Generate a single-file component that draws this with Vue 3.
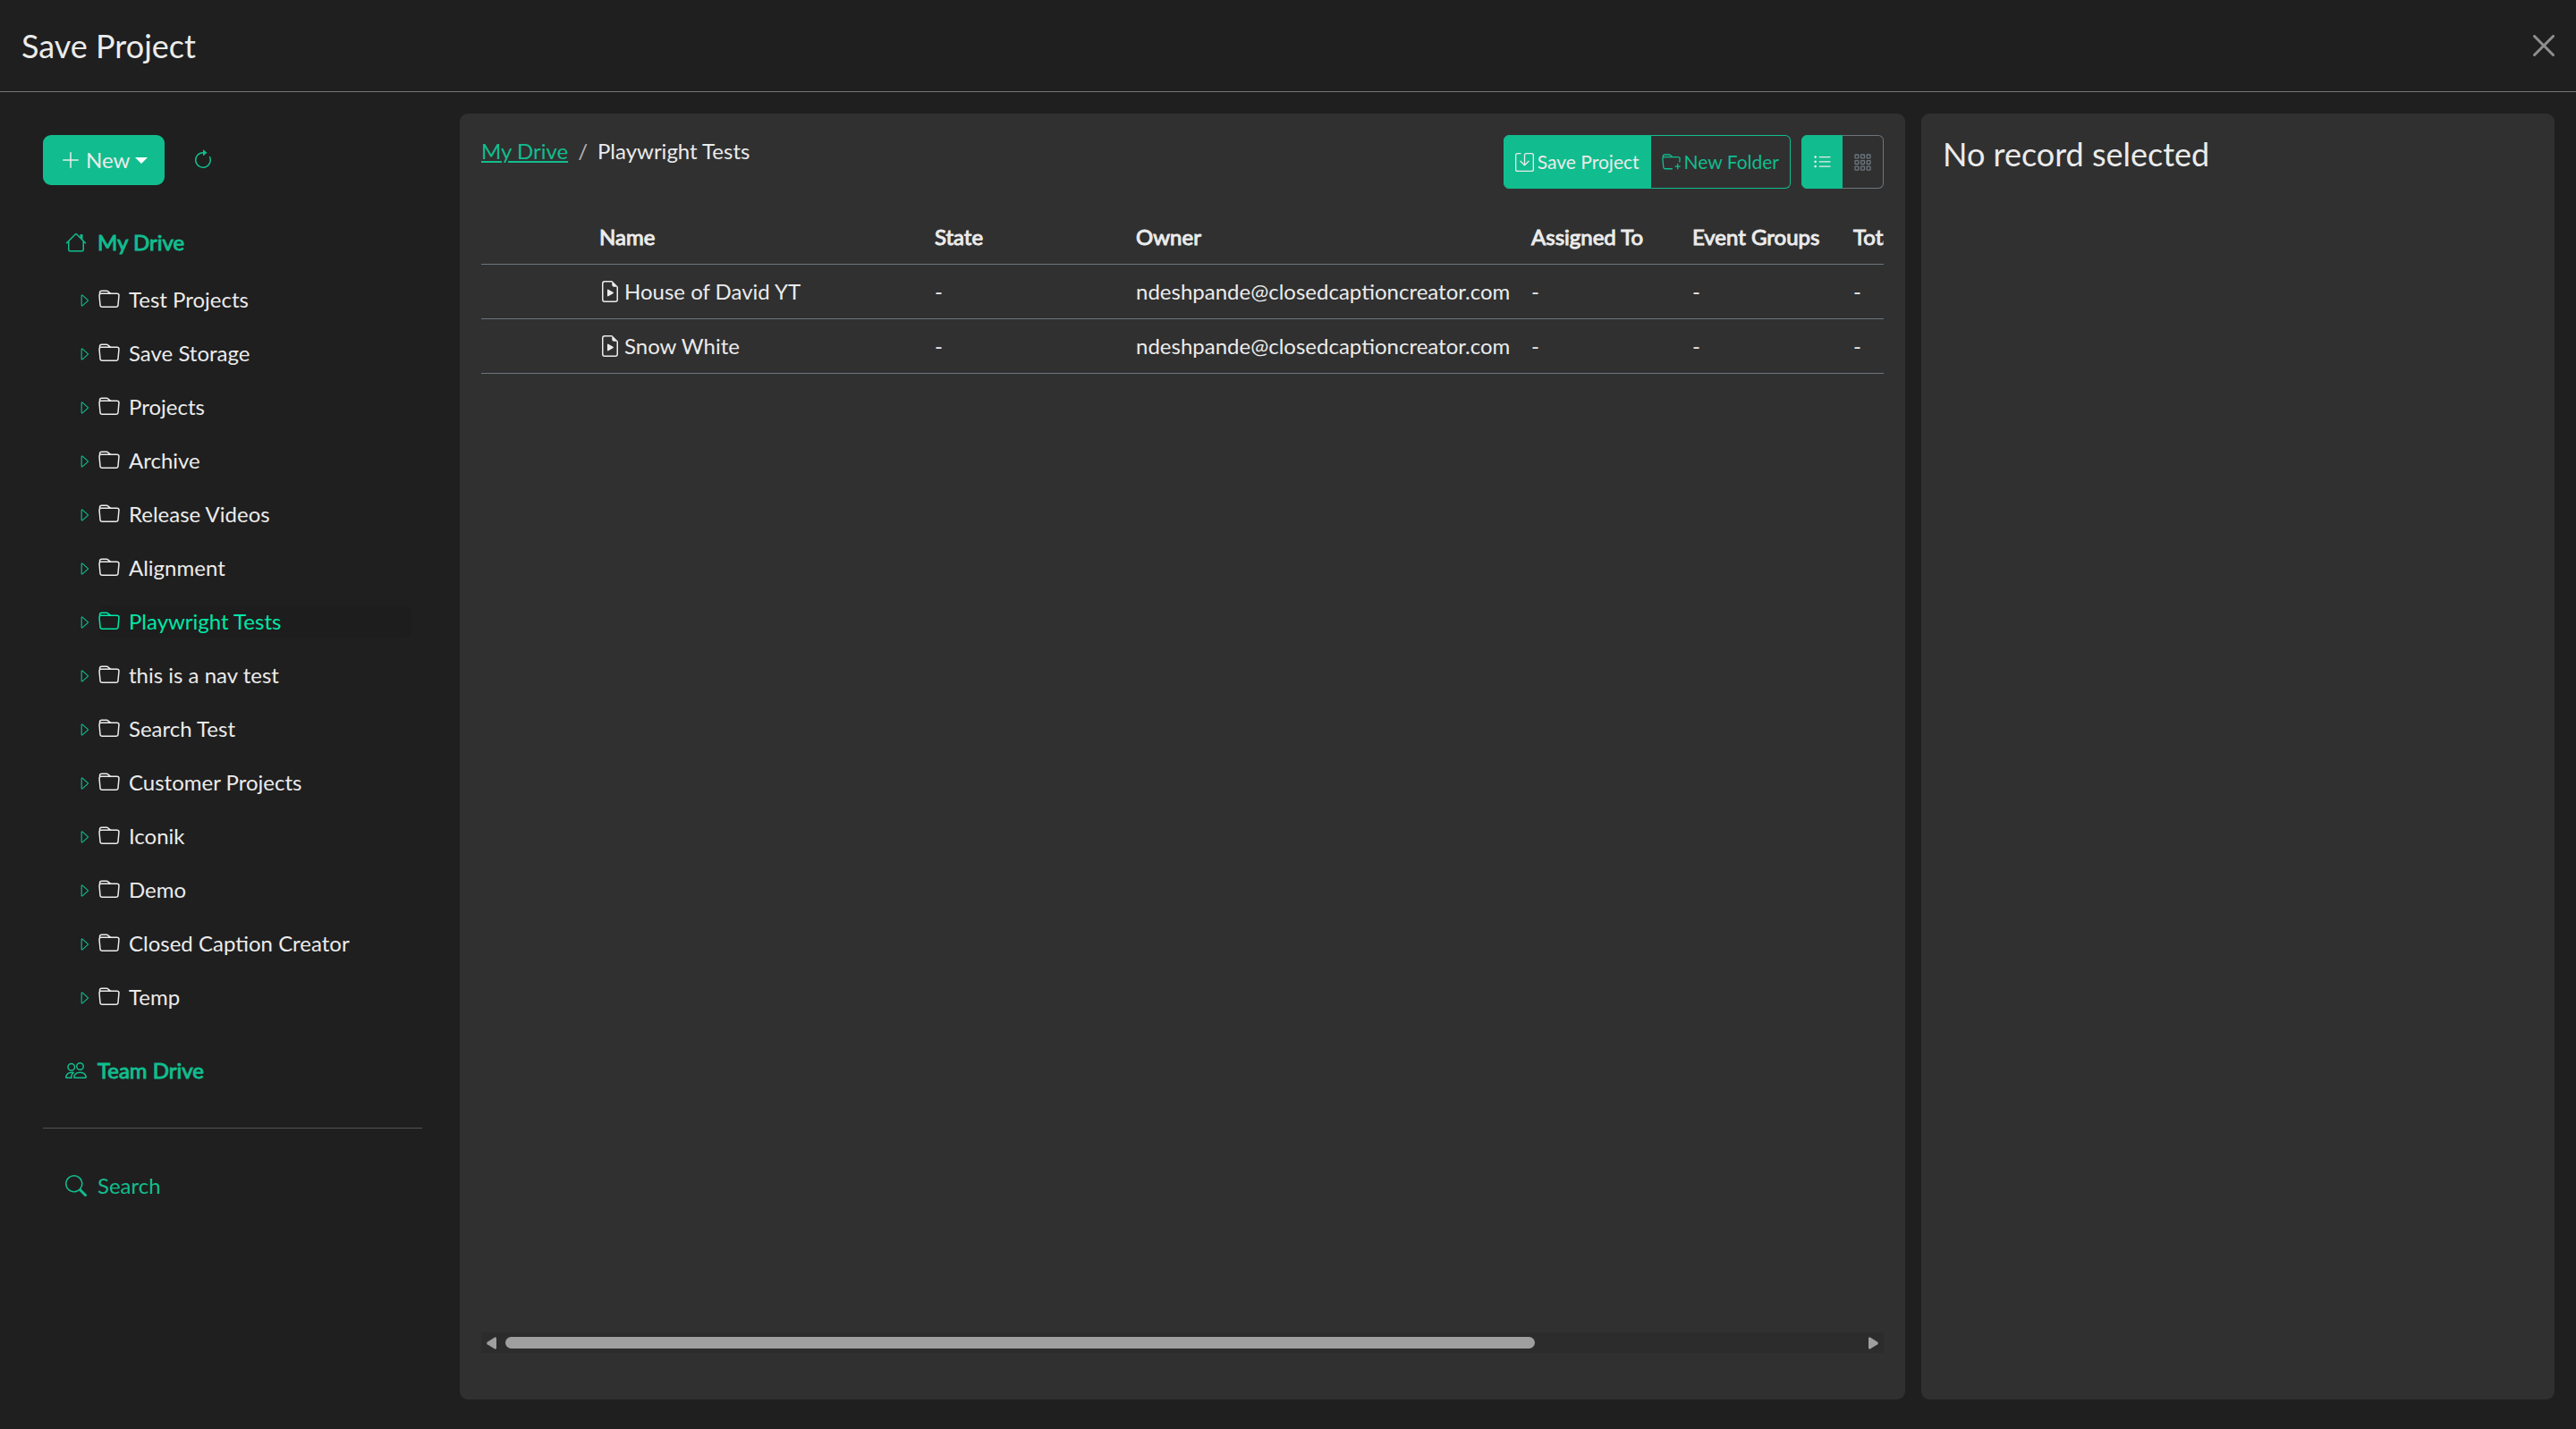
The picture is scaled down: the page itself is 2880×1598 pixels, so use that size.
<script setup>
import { h, ref } from 'vue'

const icons = {
  plus: ['M8 2a.5.5 0 0 1 .5.5v5h5a.5.5 0 0 1 0 1h-5v5a.5.5 0 0 1-1 0v-5h-5a.5.5 0 0 1 0-1h5v-5A.5.5 0 0 1 8 2'],
  refresh: [
    'M8 3a5 5 0 1 0 4.546 2.914.5.5 0 0 1 .908-.417A6 6 0 1 1 8 2z',
    'M8 4.466V.534a.25.25 0 0 1 .41-.192l2.36 1.966c.12.1.12.284 0 .384L8.41 4.658A.25.25 0 0 1 8 4.466',
  ],
  house: [
    'M2 13.5V7h1v6.5a.5.5 0 0 0 .5.5h9a.5.5 0 0 0 .5-.5V7h1v6.5a1.5 1.5 0 0 1-1.5 1.5h-9A1.5 1.5 0 0 1 2 13.5zm11-11V6l-2-2V2.5a.5.5 0 0 1 .5-.5h1a.5.5 0 0 1 .5.5z',
    'M7.293 1.5a1 1 0 0 1 1.414 0l6.647 6.646a.5.5 0 0 1-.708.708L8 2.207 1.354 8.854a.5.5 0 1 1-.708-.708L7.293 1.5z',
  ],
  caret: ['M6 12.796V3.204L11.481 8 6 12.796zm.659.753 5.48-4.796a1 1 0 0 0 0-1.506L6.66 2.451C6.011 1.885 5 2.345 5 3.204v9.592a1 1 0 0 0 1.659.753z'],
  folder: ['M.54 3.87.5 3a2 2 0 0 1 2-2h3.672a2 2 0 0 1 1.414.586l.828.828A2 2 0 0 0 9.828 3h3.982a2 2 0 0 1 1.992 2.181l-.637 7A2 2 0 0 1 13.174 14H2.826a2 2 0 0 1-1.991-1.819l-.637-7a1.99 1.99 0 0 1 .342-1.31zM2.19 4a1 1 0 0 0-.996 1.09l.637 7a1 1 0 0 0 .995.91h10.348a1 1 0 0 0 .995-.91l.637-7A1 1 0 0 0 13.81 4H2.19zm4.69-1.707A1 1 0 0 0 6.172 2H2.5a1 1 0 0 0-1 .981l.006.139C1.72 3.042 1.95 3 2.19 3h5.396l-.707-.707z'],
  people: ['M15 14s1 0 1-1-1-4-5-4-5 3-5 4 1 1 1 1zm-7.978-1L7 12.996c.001-.264.167-1.03.76-1.72C8.312 10.629 9.282 10 11 10c1.717 0 2.687.63 3.24 1.276.593.69.758 1.457.76 1.72l-.008.002-.014.002zM11 7a2 2 0 1 0 0-4 2 2 0 0 0 0 4m3-2a3 3 0 1 1-6 0 3 3 0 0 1 6 0M6.936 9.28a6 6 0 0 0-1.23-.247A7 7 0 0 0 5 9c-4 0-5 3-5 4q0 1 1 1h4.216A2.24 2.24 0 0 1 5 13c0-1.01.377-2.042 1.09-2.904.243-.294.526-.569.846-.816M4.92 10A5.5 5.5 0 0 0 4 13H1c0-.26.164-1.03.76-1.724.545-.636 1.492-1.256 3.16-1.275ZM1.5 5.5a3 3 0 1 1 6 0 3 3 0 0 1-6 0m3-2a2 2 0 1 0 0 4 2 2 0 0 0 0-4'],
  search: ['M11.742 10.344a6.5 6.5 0 1 0-1.397 1.398h-.001q.044.06.098.115l3.85 3.85a1 1 0 0 0 1.415-1.414l-3.85-3.85a1 1 0 0 0-.115-.1zM12 6.5a5.5 5.5 0 1 1-11 0 5.5 5.5 0 0 1 11 0'],
  file: [
    'M6 6.883v4.234a.5.5 0 0 0 .757.429l3.528-2.117a.5.5 0 0 0 0-.858L6.757 6.454a.5.5 0 0 0-.757.43z',
    'M14 14V4.5L9.5 0H4a2 2 0 0 0-2 2v12a2 2 0 0 0 2 2h8a2 2 0 0 0 2-2M9.5 3A1.5 1.5 0 0 0 11 4.5h2V14a1 1 0 0 1-1 1H4a1 1 0 0 1-1-1V2a1 1 0 0 1 1-1h5.5z',
  ],
  save: ['M2 1a1 1 0 0 0-1 1v12a1 1 0 0 0 1 1h12a1 1 0 0 0 1-1V2a1 1 0 0 0-1-1H9.5a1 1 0 0 0-1 1v7.293l2.646-2.647a.5.5 0 0 1 .708.708l-3.5 3.5a.5.5 0 0 1-.708 0l-3.5-3.5a.5.5 0 1 1 .708-.708L7.5 9.293V2a2 2 0 0 1 2-2H14a2 2 0 0 1 2 2v12a2 2 0 0 1-2 2H2a2 2 0 0 1-2-2V2a2 2 0 0 1 2-2h2.5a.5.5 0 0 1 0 1z'],
  folderPlus: [
    'm.5 3 .04.87a2 2 0 0 0-.342 1.311l.637 7A2 2 0 0 0 2.826 14H9v-1H2.826a1 1 0 0 1-.995-.91l-.637-7A1 1 0 0 1 2.19 4h11.62a1 1 0 0 1 .996 1.09L14.54 8h1.005l.256-2.819A2 2 0 0 0 13.81 3H9.828a2 2 0 0 1-1.414-.586l-.828-.828A2 2 0 0 0 6.172 1H2.5a2 2 0 0 0-2 2m5.672-1a1 1 0 0 1 .707.293L7.586 3H2.19q-.362.002-.683.12L1.5 2.98a1 1 0 0 1 1-.98z',
    'M13.5 9a.5.5 0 0 1 .5.5V11h1.5a.5.5 0 1 1 0 1H14v1.5a.5.5 0 1 1-1 0V12h-1.5a.5.5 0 1 1 0-1H13V9.5a.5.5 0 0 1 .5-.5',
  ],
  list: ['M5 11.5a.5.5 0 0 1 .5-.5h9a.5.5 0 0 1 0 1h-9a.5.5 0 0 1-.5-.5m0-4a.5.5 0 0 1 .5-.5h9a.5.5 0 0 1 0 1h-9a.5.5 0 0 1-.5-.5m0-4a.5.5 0 0 1 .5-.5h9a.5.5 0 0 1 0 1h-9a.5.5 0 0 1-.5-.5m-3 1a1 1 0 1 0 0-2 1 1 0 0 0 0 2m0 4a1 1 0 1 0 0-2 1 1 0 0 0 0 2m0 4a1 1 0 1 0 0-2 1 1 0 0 0 0 2'],
  close: ['M.293.293a1 1 0 0 1 1.414 0L8 6.586 14.293.293a1 1 0 1 1 1.414 1.414L9.414 8l6.293 6.293a1 1 0 0 1-1.414 1.414L8 9.414l-6.293 6.293a1 1 0 0 1-1.414-1.414L6.586 8 .293 1.707a1 1 0 0 1 0-1.414z'],
}

// Small functional component: renders one glyph of the icon set.
const Icon = (props) =>
  h('svg', { viewBox: '0 0 16 16', fill: 'currentColor', 'aria-hidden': 'true' },
    icons[props.name].map((d) => h('path', { d })))
Icon.props = ['name']

const folders = [
  'Test Projects', 'Save Storage', 'Projects', 'Archive', 'Release Videos',
  'Alignment', 'Playwright Tests', 'this is a nav test', 'Search Test',
  'Customer Projects', 'Iconik', 'Demo', 'Closed Caption Creator', 'Temp',
]
const selected = ref('Playwright Tests')

const columns = ['State', 'Owner', 'Assigned To', 'Event Groups', 'Total Events']
const projects = [
  { name: 'House of David YT', cells: ['-', 'ndeshpande@closedcaptioncreator.com', '-', '-', '-'] },
  { name: 'Snow White', cells: ['-', 'ndeshpande@closedcaptioncreator.com', '-', '-', '-'] },
]
const gridCells = [1.5, 6.5, 11.5]
</script>

<template>
  <div class="modal">
    <header class="modal-header">
      <h1 class="title">Save Project</h1>
      <button class="close" type="button" aria-label="Close"><Icon name="close" class="icon" /></button>
    </header>

    <main class="modal-body">
      <nav class="sidebar" aria-label="Drives">
        <div class="actions">
          <button class="btn-new" type="button">
            <Icon name="plus" class="icon" /><span>New</span><i class="drop"></i>
          </button>
          <button class="btn-refresh" type="button" aria-label="Refresh"><Icon name="refresh" class="icon" /></button>
        </div>

        <a href="#" class="root strong"><Icon name="house" class="icon" />My Drive</a>
        <ul class="tree">
          <li v-for="f in folders" :key="f" class="branch">
            <button class="expand" type="button" :aria-label="'Expand ' + f"><Icon name="caret" class="icon-caret" /></button>
            <a href="#" class="folder" :class="{ active: f === selected }" @click.prevent="selected = f">
              <Icon name="folder" class="icon" />{{ f }}
            </a>
          </li>
        </ul>
        <a href="#" class="root strong"><Icon name="people" class="icon" />Team Drive</a>
        <hr class="rule" />
        <a href="#" class="root"><Icon name="search" class="icon" />Search</a>
      </nav>

      <section class="panel files">
        <div class="toolbar">
          <ol class="crumbs">
            <li><a href="#">My Drive</a></li>
            <li class="slash">/</li>
            <li>Playwright Tests</li>
          </ol>
          <div class="groups">
            <div class="group">
              <button class="btn solid" type="button"><Icon name="save" class="icon-sm" />Save Project</button>
              <button class="btn outline" type="button"><Icon name="folderPlus" class="icon-sm" />New Folder</button>
            </div>
            <div class="group views">
              <button class="btn solid" type="button" aria-label="List view"><Icon name="list" class="icon-sm" /></button>
              <button class="btn muted" type="button" aria-label="Grid view">
                <svg class="icon-sm" viewBox="0 0 16 16" fill="none" stroke="currentColor" aria-hidden="true">
                  <template v-for="y in gridCells" :key="y">
                    <rect v-for="x in gridCells" :key="x" :x="x" :y="y" width="3" height="3" rx=".5" />
                  </template>
                </svg>
              </button>
            </div>
          </div>
        </div>

        <div class="scroller">
          <div class="viewport">
            <table>
              <thead>
                <tr>
                  <th class="c-thumb"></th>
                  <th class="c-name strong">Name</th>
                  <th v-for="c in columns" :key="c" class="strong" :class="'c-' + c.split(' ')[0].toLowerCase()">{{ c }}</th>
                </tr>
              </thead>
              <tbody>
                <tr v-for="p in projects" :key="p.name">
                  <td></td>
                  <td><span class="file"><Icon name="file" class="icon" />{{ p.name }}</span></td>
                  <td v-for="(c, i) in p.cells" :key="i">{{ c }}</td>
                </tr>
              </tbody>
            </table>
          </div>
          <div class="bar">
            <svg class="arrow" viewBox="0 0 11 14" aria-hidden="true"><path d="M9.500 0.300 11 1v12l-1.500.8L.8 8.200Q-.4 7 .8 5.800z" /></svg>
            <div class="track"><div class="thumb"></div></div>
            <svg class="arrow" viewBox="0 0 11 14" aria-hidden="true"><path d="M1.500.3 0 1v12l1.500.8 8.700-5.600Q11.400 7 10.200 5.800z" /></svg>
          </div>
        </div>
      </section>

      <aside class="panel details">
        <h2 class="title">No record selected</h2>
      </aside>
    </main>
  </div>
</template>

<style>
body {
  background: #1f1f1f;
}
</style>

<style scoped>
* {
  box-sizing: border-box;
}
.modal {
  min-height: 100vh;
  overflow: hidden;
  background: #1f1f1f;
  color: #ebebeb;
  font: 400 24px/36px Lato, sans-serif;
}
a {
  color: inherit;
  text-decoration: none;
}
button {
  font: inherit;
  color: inherit;
  background: none;
  border: 0;
  padding: 0;
  cursor: pointer;
}
svg {
  display: block;
  flex: none;
}
ul,
ol {
  list-style: none;
  margin: 0;
  padding: 0;
}
.icon {
  width: 24px;
  height: 24px;
}
.icon-sm {
  width: 21px;
  height: 21px;
}
.icon-caret {
  width: 18px;
  height: 18px;
}
/* Regular weight thickened by an outline, so labels keep their width. */
.strong {
  font-weight: 400;
  -webkit-text-stroke: 1px currentColor;
}
.title {
  margin: 0;
  font-size: 36px;
  font-weight: 400;
}

.modal-header {
  display: flex;
  align-items: center;
  justify-content: space-between;
  padding: 24px;
  border-bottom: 1px solid #757575;
}
.modal-header .title {
  line-height: 54px;
}
.close {
  color: #8f8f8f;
}

.modal-body {
  display: grid;
  grid-template-columns: 2fr 7fr 3fr;
  padding: 24px;
}

.sidebar {
  padding: 24px;
  min-width: 0;
  color: #11bd8e;
}
.actions {
  display: flex;
  align-items: center;
  gap: 31px;
  margin-bottom: 46px;
}
.btn-new {
  display: flex;
  align-items: center;
  gap: 5px;
  height: 56px;
  padding: 0 19px;
  border-radius: 9px;
  background: #11bd8e;
  color: #ebebeb;
}
.drop {
  margin-left: 1px;
  border: 7px solid transparent;
  border-top-color: #fff;
  border-bottom: 0;
}
.root {
  display: flex;
  align-items: center;
  gap: 12px;
  padding: 0 25px;
}
.tree {
  display: grid;
  gap: 24px;
  margin: 28px 0 46px;
}
.branch {
  display: flex;
  align-items: center;
  gap: 7px;
  padding: 0 12px 0 37px;
}
.expand {
  padding-top: 2px;
}
.folder {
  flex: 1;
  display: flex;
  align-items: center;
  gap: 10px;
  border-radius: 9px;
  color: #ebebeb;
}
.folder.active {
  background: #1d1d1d;
  color: #00e8a8;
}
.rule {
  height: 1px;
  margin: 46px 0;
  border: 0;
  background: #525252;
}

.panel {
  height: 90vh;
  min-width: 0;
  padding: 24px;
  border-radius: 9px;
  background: #303030;
}
.files {
  margin: 0 18px;
}
.details .title {
  line-height: 42px;
}
.toolbar {
  display: flex;
  justify-content: space-between;
  align-items: flex-start;
  margin-bottom: 24px;
}
.crumbs {
  display: flex;
  gap: 11px;
}
.crumbs a {
  color: #11bd8e;
  text-decoration: underline;
}
.slash {
  color: #b5b5b5;
}
.groups {
  display: flex;
  gap: 12px;
}
.group {
  display: flex;
}
.btn {
  display: flex;
  align-items: center;
  justify-content: center;
  gap: 4px;
  height: 60px;
  padding: 0 12px;
  border: 1px solid #11bd8e;
  font-size: 21px;
}
.btn:first-child {
  border-radius: 6px 0 0 6px;
}
.btn:last-child {
  border-left: 0;
  border-radius: 0 6px 6px 0;
}
.views .btn {
  width: 46px;
}
.solid {
  background: #11bd8e;
}
.outline {
  color: #11bd8e;
}
.muted {
  border-color: #6c757d;
  color: #6c757d;
}

.scroller {
  height: 80vh;
  display: flex;
  flex-direction: column;
}
.viewport {
  flex: 1;
  overflow: auto hidden;
  scrollbar-width: none;
}
table {
  width: 131%;
  table-layout: fixed;
  border-collapse: collapse;
  white-space: nowrap;
}
th,
td {
  height: 61px;
  padding: 0 12px;
  text-align: left;
  border-bottom: 1px solid #6c757d;
}
th {
  height: 60px;
}
.c-thumb {
  width: 120px;
}
.c-name {
  width: 375px;
}
.c-state {
  width: 225px;
}
.c-owner {
  width: 442px;
}
.c-assigned,
.c-event {
  width: 180px;
}
.file {
  display: flex;
  align-items: center;
  gap: 4px;
}
.bar {
  display: flex;
  align-items: center;
  gap: 10px;
  padding: 0 6px;
  height: 23px;
  background: #2c2c2c;
}
.arrow {
  width: 11px;
  height: 14px;
  fill: #9f9f9f;
}
.track {
  flex: 1;
}
.thumb {
  width: 76%;
  height: 13px;
  border-radius: 7px;
  background: #9f9f9f;
}
</style>
